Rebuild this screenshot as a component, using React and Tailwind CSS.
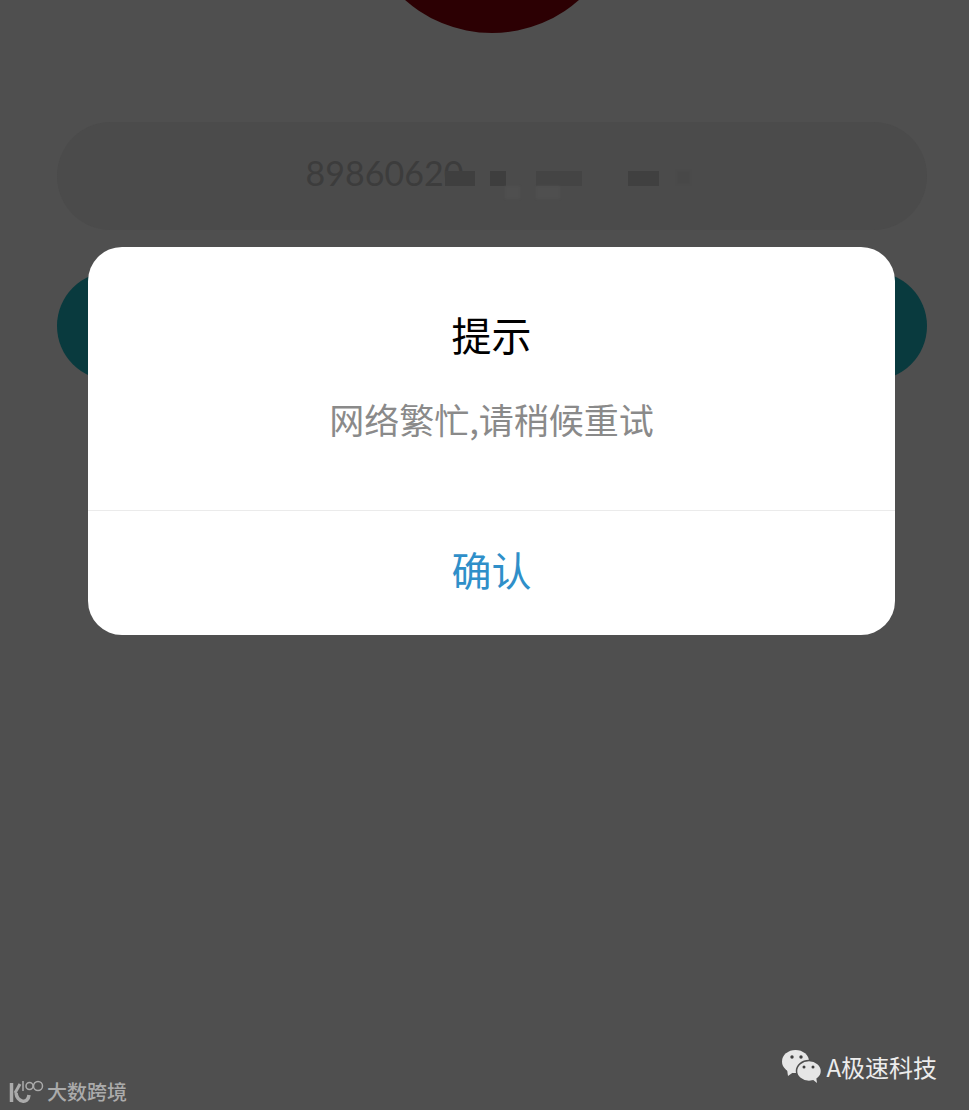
import React from 'react';

const cjk = { fontFamily: '"Noto Sans CJK SC", "Liberation Sans", sans-serif' };

// blurred-out digits on the masked number
const Mosaic = () => (
    <div className="flex flex-col -ml-[18px] mt-[18px]">
        <div className="flex items-start h-[15px]">
            <div className="w-[30px] h-[15px] bg-[#3f3f3f] blur-[0.5px]" />
            <div className="w-[16px] h-[15px] ml-[15px] bg-[#3e3e3e] blur-[0.5px]" />
            <div className="w-[46px] h-[15px] ml-[30px] bg-[#444444] blur-[0.5px]" />
            <div className="w-[31px] h-[15px] ml-[46px] bg-[#404040] blur-[0.5px]" />
            <div className="w-[13px] h-[13px] ml-[18px] bg-[#484848] blur-[1px]" />
        </div>
        <div className="flex h-[13px] ml-[60px]">
            <div className="w-[15px] h-[13px] bg-[#4f4f4f] blur-[1px]" />
            <div className="w-[24px] h-[13px] ml-[16px] bg-[#4f4f4f] blur-[1px]" />
        </div>
    </div>
);

const WeChatIcon = () => (
    <svg width="40" height="34" viewBox="0 0 40 34" className="shrink-0">
        <ellipse cx="13.5" cy="11.5" rx="13.5" ry="11.5" fill="#e6e6e6" />
        <path d="M5 19 L6 26 L13 21 Z" fill="#e6e6e6" />
        <circle cx="10" cy="7" r="1.7" fill="#3f3f3f" />
        <circle cx="19" cy="7" r="1.7" fill="#3f3f3f" />
        <ellipse cx="27" cy="21" rx="12.5" ry="10.5" fill="#e6e6e6" stroke="#4f4f4f" strokeWidth="1.5" />
        <path d="M30 29 L35 33 L34 26 Z" fill="#e6e6e6" />
        <circle cx="22" cy="17" r="1.5" fill="#3f3f3f" />
        <circle cx="31" cy="17" r="1.5" fill="#3f3f3f" />
    </svg>
);

const KuaidiLogo = () => (
    <svg width="36" height="28" viewBox="0 0 36 28" className="shrink-0" fill="none" stroke="#ababab">
        <path d="M3.5 5 V24" strokeWidth="3.5" />
        <path d="M12 6 L7 15" strokeWidth="3" />
        <path d="M8 15 C9 24 20 27 21 17" strokeWidth="3.5" />
        <path d="M15 3 V13" strokeWidth="1.5" />
        <circle cx="21.5" cy="8" r="3.5" strokeWidth="1.5" />
        <circle cx="30" cy="8" r="4.5" strokeWidth="1.5" />
    </svg>
);

const Dialog = () => (
    <div className="absolute left-[88px] top-[247px] w-[807px] h-[388px] rounded-[34px] bg-white flex flex-col">
        <div className="h-[264px] flex flex-col items-center border-b border-[#ebebeb]">
            <div className="mt-[58px] text-[40px] leading-[58px] text-black">提示</div>
            <div className="mt-[30px] text-[35px] leading-[52px] text-[#8a8a8a]">网络繁忙,请稍候重试</div>
        </div>
        <div className="flex-1 flex items-center justify-center text-[40px] text-[#2f8fc9] pb-[8px]">确认</div>
    </div>
);

export default function App() {
    return (
        <div className="relative w-[969px] h-[1110px] overflow-hidden bg-[#4f4f4f] flex flex-col pl-[57px] pr-[42px]" style={cjk}>
            <div className="self-center shrink-0 w-[262px] h-[262px] rounded-full bg-[#2c0003] -mt-[229px]" />

            <div className="mt-[89px] h-[108px] rounded-[54px] bg-[#4b4b4b] flex items-center justify-center pl-[12px]">
                <div className="flex items-start">
                    <span className="text-[34px] leading-[40px] text-[#3c3c3c]" style={{ fontFamily: 'Lato, sans-serif' }}>89860620</span>
                    <Mosaic />
                </div>
            </div>

            <div className="mt-[42px] h-[108px] rounded-[54px] bg-[#093a3e]" />

            <div className="mt-auto -ml-[49px] -mr-[10px] flex items-end justify-between pb-[3px]">
                <div className="flex items-center gap-[3px] text-[20px] font-medium text-[#ababab]">
                    <KuaidiLogo />
                    <span>大数跨境</span>
                </div>
                <div className="flex items-center gap-[4px] mb-[22px] text-[24px] text-[#ececec]">
                    <WeChatIcon />
                    <span>A极速科技</span>
                </div>
            </div>

            <Dialog />
        </div>
    );
}
